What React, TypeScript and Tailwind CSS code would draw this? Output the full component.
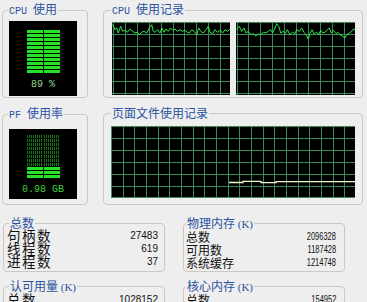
import React from "react";

const GRID = "#3a8a5c";

function GraphGrid({ w, h, sx, sy, ox, oy }: { w: number; h: number; sx: number; sy: number; ox: number; oy: number }) {
  const lines: React.ReactNode[] = [];
  for (let x = ox, i = 0; x < w; x += sx, i++) {
    const p = Math.round(x) + 0.5;
    lines.push(<line key={"v" + i} x1={p} y1={0} x2={p} y2={h} />);
  }
  for (let y = oy, i = 0; y < h; y += sy, i++) {
    const p = Math.round(y) + 0.5;
    lines.push(<line key={"h" + i} x1={0} y1={p} x2={w} y2={p} />);
  }
  return (
    <g stroke={GRID} strokeWidth={1}>
      {lines}
    </g>
  );
}

const cpu1: [number, number][] = [
  [36, 65], [40, 68], [45, 80], [50, 75], [55, 90], [62, 70], [68, 85], [75, 82], [82, 88], [90, 78], [98, 85], [105, 90], [112, 88],
  [118, 95], [125, 88], [132, 85], [140, 90], [148, 75], [155, 65], [160, 85], [165, 88], [172, 80], [180, 90], [186, 75],
  [192, 88], [198, 78], [205, 85], [212, 75], [218, 82], [225, 78], [232, 85], [240, 80], [248, 85], [255, 82], [262, 88],
  [268, 90], [275, 80], [282, 85], [290, 95], [296, 75], [302, 85], [310, 90], [318, 80], [325, 70], [330, 88], [338, 92],
  [345, 80], [352, 88], [360, 82], [368, 90], [375, 80], [383, 85], [390, 78],
];
const cpu2: [number, number][] = [
  [409, 80], [418, 70], [425, 85], [432, 75], [438, 90], [445, 85], [452, 95], [460, 92], [468, 100], [475, 92], [482, 95],
  [490, 88], [498, 90], [505, 85], [512, 80], [518, 90], [525, 75], [530, 62], [536, 70], [542, 90], [550, 85], [556, 92],
  [562, 80], [570, 95], [578, 88], [585, 92], [590, 80], [598, 85], [605, 75], [612, 88], [618, 95], [625, 108], [630, 90],
  [636, 80], [642, 92], [650, 88], [656, 95], [662, 82], [668, 90], [675, 88], [682, 80], [688, 75], [694, 90], [700, 82],
  [708, 92], [714, 88], [720, 95], [728, 100], [735, 105], [740, 95], [748, 90], [755, 85], [760, 78], [765, 80],
];

function CpuGraph({ w, pts, dx, ox }: { w: number; pts: [number, number][]; dx: number; ox: number }) {
  const h = 73;
  const p = pts.map(([x, y]) => `${(x / 3 - dx).toFixed(1)},${(y / 3 - 19).toFixed(1)}`).join(" ");
  return (
    <svg width={w} height={h} className="block bg-black shrink-0">
      <GraphGrid w={w} h={h} sx={11.9} sy={11.85} ox={ox} oy={0} />
      <polyline points={p} fill="none" stroke="#2ee84a" strokeWidth={1} />
    </svg>
  );
}

function PageGraph() {
  const w = 244;
  const h = 72;
  return (
    <svg width={w} height={h} className="block bg-black">
      <GraphGrid w={w} h={h} sx={11.67} sy={11.9} ox={0} oy={0} />
      <polyline
        points="118,56.5 132,56.5 132,55.3 150,55.3 150,56.7 165,56.7 165,55.7 244,55.7"
        fill="none"
        stroke="#f6f6cc"
        strokeWidth={1.3}
      />
    </svg>
  );
}

function Meter({ lit, total, text, textColor, pt, textMt, h }: { lit: number; total: number; text: string; textColor: string; pt: string; textMt: string; h: string }) {
  const rows = Array.from({ length: total }, (_, i) => i >= total - lit);
  return (
    <div className={`ml-[1px] w-[68px] ${h} bg-black flex flex-col items-center ${pt}`}>
      <div className="flex flex-col gap-[1px]">
        {rows.map((on, i) => (
          <div key={i} className="flex gap-[1px]">
            <div
              className={
                on
                  ? "w-[16px] h-[3px] bg-[#22e622]"
                  : "w-[16px] h-[3px] bg-[repeating-linear-gradient(90deg,#127a12_0px,#127a12_1px,#000_1px,#000_2px)]"
              }
            />
            <div
              className={
                on
                  ? "w-[16px] h-[3px] bg-[#22e622]"
                  : "w-[16px] h-[3px] bg-[repeating-linear-gradient(90deg,#127a12_0px,#127a12_1px,#000_1px,#000_2px)]"
              }
            />
          </div>
        ))}
      </div>
      <div className={`${textMt} font-['Liberation_Mono',monospace] text-[10px] leading-[11px] ${textColor} whitespace-pre`}>{text}</div>
    </div>
  );
}

function Legend({ latin, cjk, extra, cls = "" }: { latin?: string; cjk: string; extra?: string; cls?: string }) {
  return (
    <legend className={`px-[1px] text-[12px] leading-[14px] text-[#2a52a0] whitespace-pre ${cls}`}>
      {latin && <span className="font-['Liberation_Mono',monospace] text-[10px]">{latin} </span>}
      <span>{cjk}</span>
      {extra && <span className="font-['Liberation_Serif',serif] text-[11px]"> {extra}</span>}
    </legend>
  );
}

function StatRow({ label, value, right }: { label: string; value: string; right?: boolean }) {
  return (
    <div className="flex items-center justify-between h-[13px]">
      <span className={right ? "text-[12px] leading-[13px] text-[#111]" : "text-[13.5px] leading-[13px] tracking-[1.5px] text-[#111]"}>{label}</span>
      <span
        className={
          right
            ? "inline-block origin-right scale-x-75 font-['Liberation_Sans',sans-serif] text-[10px] leading-[13px] text-[#111]"
            : "font-['Liberation_Sans',sans-serif] text-[10px] leading-[13px] text-[#111]"
        }
      >
        {value}
      </span>
    </div>
  );
}

export default function App() {
  return (
    <div className="w-[367px] h-[302px] overflow-hidden bg-[#eeeeee] font-['Noto_Sans_CJK_SC','Noto_Sans',sans-serif] flex flex-col">
      {/* Row 1 */}
      <div className="flex pl-[2px] gap-[15px] mt-[2px]">
        <fieldset className="min-w-0 w-[86px] h-[96px] border border-[#c9c9c1] rounded-[4px] pl-[5px]">
          <Legend latin="CPU" cjk="使用" />
          <div className="mt-[2px]">
            <Meter lit={11} total={11} text="89 %" textColor="text-[#8fd88f]" pt="pt-[9px]" textMt="mt-[6px]" h="h-[75px]" />
          </div>
        </fieldset>
        <fieldset className="min-w-0 w-[260px] h-[96px] border border-[#c9c9c1] rounded-[4px] pl-[7px]">
          <Legend latin="CPU" cjk="使用记录" />
          <div className="mt-[3px] ml-[1px] flex gap-[6px]">
            <CpuGraph w={118} pts={cpu1} dx={12} ox={1} />
            <CpuGraph w={119} pts={cpu2} dx={136} ox={0.5} />
          </div>
        </fieldset>
      </div>

      {/* Row 2 */}
      <div className="flex pl-[2px] gap-[15px] mt-[8px]">
        <fieldset className="min-w-0 w-[86px] h-[99px] border border-[#c9c9c1] rounded-[4px] pl-[5px]">
          <Legend latin="PF" cjk="使用率" />
          <div className="mt-[6px]">
            <Meter lit={3} total={11} text="0.98 GB" textColor="text-[#3ed03e]" pt="pt-[6px]" textMt="mt-[6px]" h="h-[70px]" />
          </div>
        </fieldset>
        <fieldset className="min-w-0 w-[260px] h-[99px] border border-[#c9c9c1] rounded-[4px] pl-[7px]">
          <Legend cjk="页面文件使用记录" />
          <div className="mt-[6px]">
            <PageGraph />
          </div>
        </fieldset>
      </div>

      {/* Row 3 */}
      <div className="flex pl-[3px] gap-[18px] mt-[11px]">
        <fieldset className="min-w-0 w-[162px] h-[56px] border border-[#c9c9c1] rounded-[4px] pl-[3px] pr-[6px]">
          <Legend cjk="总数" cls="ml-[2px]" />
          <div className="-mt-[1px] flex flex-col">
            <StatRow label="句柄数" value="27483" />
            <StatRow label="线程数" value="619" />
            <StatRow label="进程数" value="37" />
          </div>
        </fieldset>
        <fieldset className="min-w-0 w-[162px] h-[56px] border border-[#c9c9c1] rounded-[4px] pl-[2px] pr-[8px]">
          <Legend cjk="物理内存" extra="(K)" />
          <div className="-mt-[1px] flex flex-col">
            <StatRow right label="总数" value="2096328" />
            <StatRow right label="可用数" value="1187428" />
            <StatRow right label="系统缓存" value="1214748" />
          </div>
        </fieldset>
      </div>

      {/* Row 4 */}
      <div className="flex pl-[3px] gap-[18px] mt-[7px]">
        <fieldset className="min-w-0 w-[162px] h-[56px] border border-[#c9c9c1] rounded-[4px] pl-[3px] pr-[6px]">
          <Legend cjk="认可用量" extra="(K)" cls="ml-[2px]" />
          <div className="-mt-[1px] flex flex-col">
            <StatRow label="总数" value="1028152" />
          </div>
        </fieldset>
        <fieldset className="min-w-0 w-[162px] h-[56px] border border-[#c9c9c1] rounded-[4px] pl-[2px] pr-[8px]">
          <Legend cjk="核心内存" extra="(K)" />
          <div className="-mt-[1px] flex flex-col">
            <StatRow right label="总数" value="154952" />
          </div>
        </fieldset>
      </div>
    </div>
  );
}
